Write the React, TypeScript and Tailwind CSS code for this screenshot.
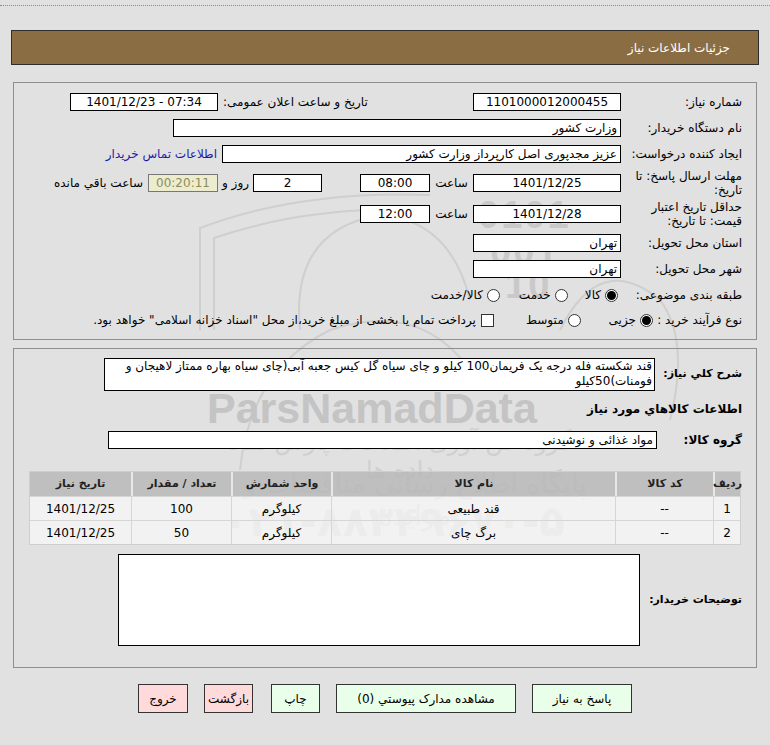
import React from "react";

const font = "font-['Tahoma','DejaVu_Sans',sans-serif]";

function Box({ w, children, align = "center", className = "" }: { w: string; children?: React.ReactNode; align?: "center" | "right"; className?: string }) {
  return (
    <div
      className={`${w} h-[18px] shrink-0 border border-black bg-white flex items-center px-[3px] whitespace-nowrap ${
        align === "center" ? "justify-center" : "justify-start"
      } ${className}`}
    >
      {children}
    </div>
  );
}

function Radio({ checked }: { checked?: boolean }) {
  return (
    <span className="w-[13px] h-[13px] shrink-0 rounded-full border border-[#333] bg-white flex items-center justify-center">
      {checked && <span className="w-[9px] h-[9px] rounded-full bg-black" />}
    </span>
  );
}

function Label({ children, w = "w-[121px]" }: { children: React.ReactNode; w?: string }) {
  return <div className={`${w} shrink-0 leading-[14px] whitespace-nowrap`}>{children}</div>;
}

function Watermark() {
  return (
    <div aria-hidden className="absolute inset-0 z-0 pointer-events-none select-none text-[#c9c9c9]">
      <svg className="absolute left-0 top-0" width="770" height="745" fill="none" stroke="#cfcfcf" strokeWidth="2">
        <path d="M200 330 L200 228 Q300 190 430 195" />
        <path d="M214 330 L214 238 Q310 205 430 210" />
        <path d="M300 330 Q290 230 380 215 Q450 220 470 300" />
        <path d="M240 470 Q250 370 330 330 Q420 300 470 370" />
        <path d="M560 330 Q600 250 660 300 Q690 340 670 420" />
      </svg>
      <div className="absolute left-[478px] top-[196px] font-['Liberation_Sans',sans-serif] font-bold text-[38px] leading-[38px] tracking-[2px]">
        0101
      </div>
      <div className="absolute left-[490px] top-[232px] font-['Liberation_Sans',sans-serif] font-bold text-[38px] leading-[38px] tracking-[2px]">
        001
      </div>
      <div className="absolute left-[505px] top-[266px] font-['Liberation_Sans',sans-serif] font-bold text-[38px] leading-[38px] tracking-[2px]">
        10
      </div>
      <div className="absolute left-[207px] top-[386px] font-['Liberation_Sans',sans-serif] font-bold text-[43px] leading-[44px] text-[#c4c4c4]">
        ParsNamadData
      </div>
      <div dir="rtl" className="absolute left-[205px] top-[428px] w-[390px] text-center text-[24px] leading-[28px] text-[#d0d0d0]">
        گروه فن آوری اطلاعات پارس نماد داده ها
      </div>
      <div dir="rtl" className="absolute left-[225px] top-[468px] w-[380px] text-center text-[27px] leading-[32px] text-[#cdcdcd]">
        پایگاه اطلاع رسانی مناقصات و مزایده
      </div>
      <div dir="rtl" className="absolute left-[225px] top-[500px] w-[340px] text-center font-bold text-[42px] leading-[44px] text-[#cdcdcd]">
        ۰۲۱-۸۸۳۴۹۶۷۰-۵
      </div>
    </div>
  );
}

const cols = [
  { w: "w-[27px]", h: "ردیف" },
  { w: "w-[98px]", h: "کد کالا" },
  { w: "w-[284px]", h: "نام کالا" },
  { w: "w-[100px]", h: "واحد شمارش" },
  { w: "w-[100px]", h: "تعداد / مقدار" },
  { w: "flex-1", h: "تاریخ نیاز" },
];

const rows = [
  ["1", "--", "قند طبیعی", "کیلوگرم", "100", "1401/12/25"],
  ["2", "--", "برگ چای", "کیلوگرم", "50", "1401/12/25"],
];

export default function App() {
  return (
    <div className={`relative w-[770px] h-[745px] overflow-hidden bg-[#e1e1e1] text-[12px] text-black ${font}`}>
      <Watermark />
      <div dir="rtl" className="relative z-10 flex flex-col">
        {/* dotted top line */}
        <div className="mt-[5px] border-t border-dotted border-[#8a8a8a]" />

        {/* header */}
        <div className="mt-[24px] mx-[11px] h-[35px] bg-[#8b6d43] border border-[#2e2e2e] flex items-center pr-[28px] text-white text-[12px]">
          جزئیات اطلاعات نیاز
        </div>

        {/* panel 1 */}
        <div className="mt-[17px] mx-[13px] h-[258px] border border-[#8f8f8f] pr-[14px] pt-[10px] flex flex-col">
          <div className="flex items-center h-[18px]">
            <Label>شماره نیاز:</Label>
            <Box w="w-[148px]">1101000012000455</Box>
            <div className="w-[255px] shrink-0 flex justify-end pl-[5px] whitespace-nowrap">تاریخ و ساعت اعلان عمومی:</div>
            <Box w="w-[148px]">
              <span dir="ltr">1401/12/23 - 07:34</span>
            </Box>
          </div>

          <div className="flex items-center h-[18px] mt-[8px]">
            <Label>نام دستگاه خریدار:</Label>
            <Box w="w-[448px]" align="right">وزارت کشور</Box>
          </div>

          <div className="flex items-center h-[18px] mt-[8px]">
            <Label>ایجاد کننده درخواست:</Label>
            <Box w="w-[399px]" align="right">عزیز مجدپوری اصل کارپرداز وزارت کشور</Box>
            <span className="mr-[5px] text-[#1c1ca8] whitespace-nowrap">اطلاعات تماس خریدار</span>
          </div>

          <div className="flex items-center h-[28px] mt-[6px]">
            <Label>
              مهلت ارسال پاسخ: تا
              <br />
              تاریخ:
            </Label>
            <Box w="w-[148px]">1401/12/25</Box>
            <div className="w-[43px] shrink-0 text-center">ساعت</div>
            <Box w="w-[70px]">08:00</Box>
            <div className="w-[38px] shrink-0" />
            <Box w="w-[69px]">2</Box>
            <div className="w-[35px] shrink-0 text-center">روز و</div>
            <Box w="w-[70px]" className="!bg-[#ececcf] !border-[#777] text-[#8c8c5c]">
              00:20:11
            </Box>
            <span className="mr-[5px] whitespace-nowrap">ساعت باقي مانده</span>
          </div>

          <div className="flex items-center h-[28px] mt-[3px]">
            <Label>
              حداقل تاریخ اعتبار
              <br />
              قیمت: تا تاریخ:
            </Label>
            <Box w="w-[148px]">1401/12/28</Box>
            <div className="w-[43px] shrink-0 text-center">ساعت</div>
            <Box w="w-[70px]">12:00</Box>
          </div>

          <div className="flex items-center h-[18px] mt-[6px]">
            <Label>استان محل تحویل:</Label>
            <Box w="w-[148px]" align="right">تهران</Box>
          </div>

          <div className="flex items-center h-[18px] mt-[8px]">
            <Label>شهر محل تحویل:</Label>
            <Box w="w-[148px]" align="right">تهران</Box>
          </div>

          <div className="flex items-center h-[18px] mt-[8px]">
            <Label>طبقه بندی موضوعی:</Label>
            <div className="flex items-center gap-[4px] mr-[3px]">
              <Radio checked />
              <span>کالا</span>
            </div>
            <div className="flex items-center gap-[4px] mr-[17px]">
              <Radio />
              <span>خدمت</span>
            </div>
            <div className="flex items-center gap-[4px] mr-[19px]">
              <Radio />
              <span>کالا/خدمت</span>
            </div>
          </div>

          <div className="flex items-center h-[18px] mt-[7px]">
            <Label w="w-[89px]">نوع فرآیند خرید :</Label>
            <div className="flex items-center gap-[4px]">
              <Radio checked />
              <span>جزیی</span>
            </div>
            <div className="flex items-center gap-[4px] mr-[28px]">
              <Radio />
              <span>متوسط</span>
            </div>
            <div className="flex items-center gap-[5px] mr-[32px] whitespace-nowrap">
              <span className="w-[13px] h-[13px] border border-[#333] bg-white shrink-0" />
              <span>پرداخت تمام یا بخشی از مبلغ خرید،از محل "اسناد خزانه اسلامی" خواهد بود.</span>
            </div>
          </div>
        </div>

        {/* panel 2 */}
        <div className="mt-[8px] mx-[13px] h-[320px] border border-[#8f8f8f] pr-[14px] pt-[9px] flex flex-col">
          <div className="flex items-center">
            <div className="w-[87px] shrink-0 font-bold text-[11px] whitespace-nowrap">شرح کلي نیاز:</div>
            <div className="w-[551px] h-[33px] border border-black bg-white px-[2px] leading-[15px] overflow-hidden">
              قند شکسته فله درجه یک فریمان100 کیلو و چای سیاه گل کیس جعبه آبی(چای سیاه بهاره ممتاز لاهیجان و فومنات)50کیلو
            </div>
          </div>

          <div className="mt-[10px] font-bold text-[12px] leading-[16px]">اطلاعات کالاهاي مورد نیاز</div>

          <div className="flex items-center mt-[14px]">
            <div className="w-[85px] shrink-0 font-bold text-[12px] whitespace-nowrap">گروه کالا:</div>
            <Box w="w-[549px]" align="right">مواد غذائی و نوشیدنی</Box>
          </div>

          <div className="mt-[22px] mr-[1px] w-[712px] border border-[#cfcfcf] flex flex-col">
            <div className="flex h-[24px] bg-[#b9b9b9]/85 text-[11px] font-bold text-[#222]">
              {cols.map((c, i) => (
                <div
                  key={i}
                  className={`${c.w} shrink-0 flex items-center justify-center ${i < cols.length - 1 ? "border-l-2 border-[#e8e8e8]" : ""}`}
                >
                  {c.h}
                </div>
              ))}
            </div>
            {rows.map((r, ri) => (
              <div key={ri} className="flex h-[24px] bg-[#f9f9f9]/70 border-t border-[#d6d6d6]">
                {r.map((v, i) => (
                  <div
                    key={i}
                    className={`${cols[i].w} shrink-0 flex items-center justify-center ${i < r.length - 1 ? "border-l border-[#d6d6d6]" : ""}`}
                  >
                    {v}
                  </div>
                ))}
              </div>
            ))}
          </div>

          <div className="flex items-center mt-[9px]">
            <div className="w-[102px] shrink-0 font-bold text-[11px] whitespace-nowrap">توضیحات خریدار:</div>
            <div className="w-[522px] h-[92px] border border-black bg-white" />
          </div>
        </div>

        {/* buttons */}
        <div className="mt-[16px] flex items-center pr-[138px] h-[29px]">
          <button className="w-[100px] h-[29px] border border-[#333] bg-[#eaffea]">پاسخ به نیاز</button>
          <button className="mr-[16px] w-[180px] h-[29px] border border-[#333] bg-[#eaffea]">مشاهده مدارک پیوستي (0)</button>
          <button className="mr-[16px] w-[49px] h-[29px] border border-[#333] bg-[#eaffea]">چاپ</button>
          <button className="mr-[18px] w-[49px] h-[29px] border border-[#333] bg-[#ffdada]">بازگشت</button>
          <button className="mr-[16px] w-[50px] h-[29px] border border-[#333] bg-[#ffdada]">خروج</button>
        </div>
      </div>
    </div>
  );
}
